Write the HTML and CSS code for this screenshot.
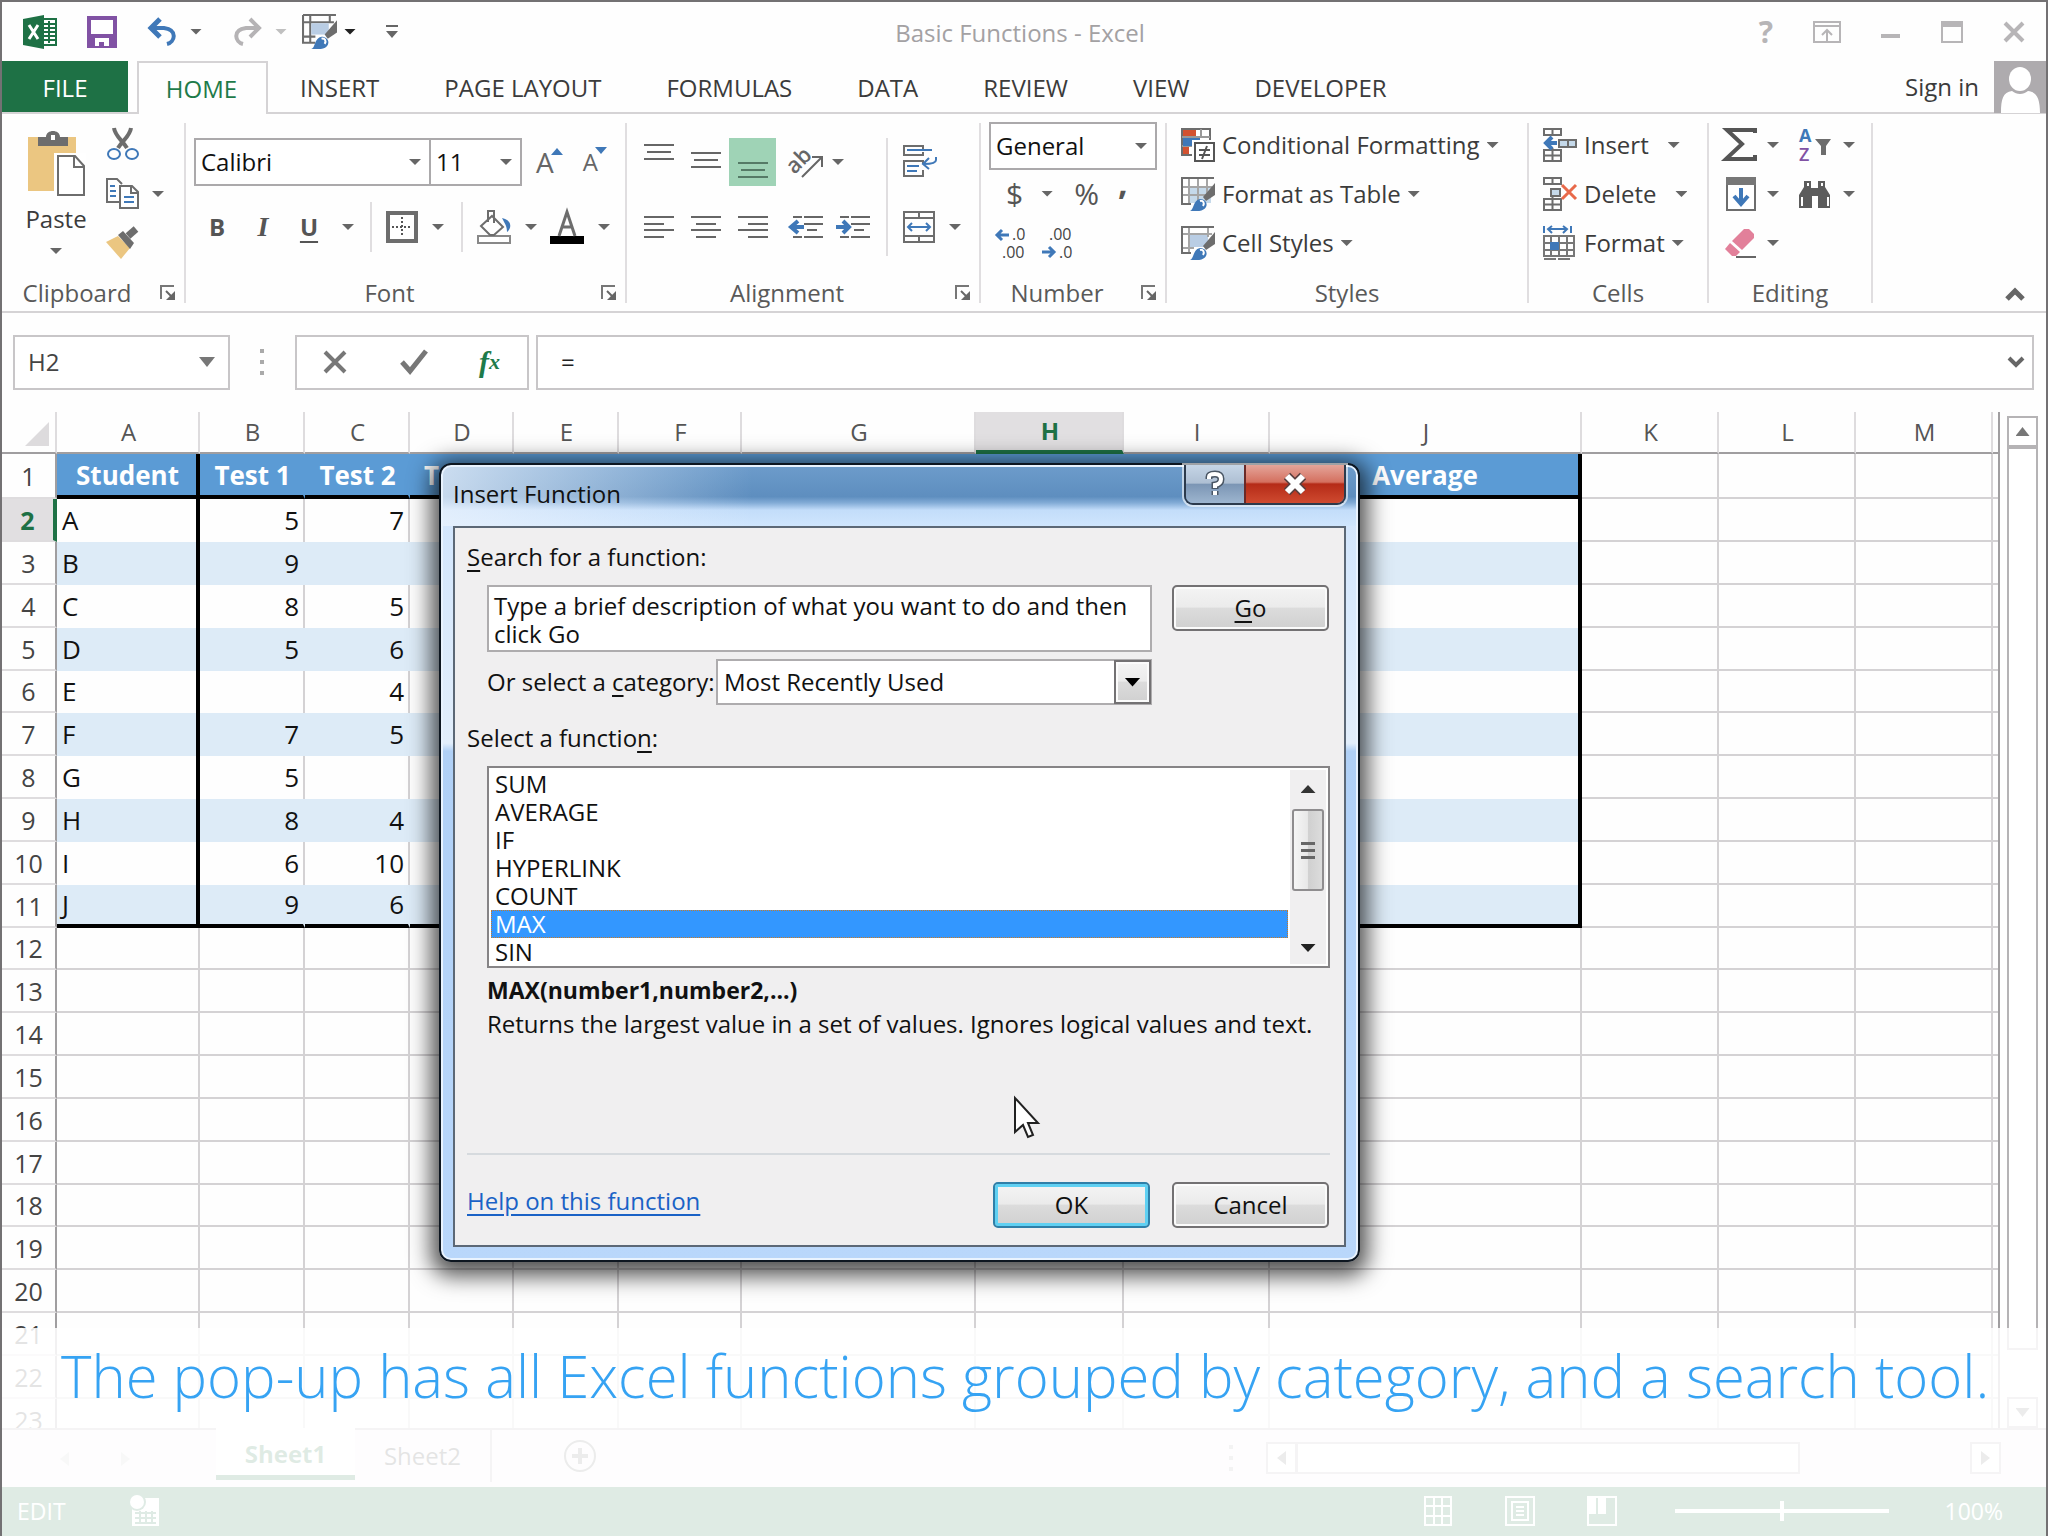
FILE: index.html
```html
<!DOCTYPE html>
<html lang="en">
<head>
<meta charset="utf-8">
<title>Basic Functions - Excel</title>
<link rel="stylesheet" href="styles.css">
</head>
<body>
<svg class="defs" aria-hidden="true">
  <symbol id="brush" viewBox="0 0 34 34">
    <path d="M34 6v12L25 24l-3-4z" fill="#6d6d6d"/>
    <path d="M9 34c4-1 3-11 10-12 5 0 8 4 6 8-2 4-9 5-16 4z" fill="#3f78b8"/>
    <path d="M19 24c3-1 5 2 3 5" fill="none" stroke="#fff" stroke-width="2"/>
  </symbol>
  <symbol id="launch" viewBox="0 0 16 16">
    <path d="M1 14V1h13" fill="none" stroke="#777" stroke-width="2"/>
    <path d="M6 6l7 7" stroke="#666" stroke-width="2"/><path d="M15 6v9H6z" fill="#666"/>
  </symbol>
  <symbol id="cellstop" viewBox="0 0 34 34">
    <path d="M1 1h17v6H1zM9.500 1v6M1 22h17v11H1zM9.500 20v13M1 27.500h17" fill="none" stroke="#6d6d6d" stroke-width="2"/>
  </symbol>
</svg>

<div class="app">
  <header class="titlebar">
    <div class="qat">
      <svg width="34" height="34" viewBox="0 0 34 34"><path d="M18 4h15v26H18z" fill="#fff" stroke="#1e7145" stroke-width="2"/><path d="M20 9h12M20 13h12M20 17h12M20 21h12M20 25h12M26 6v22" stroke="#1e7145" stroke-width="2"/><path d="M0 4L21 0v34L0 30z" fill="#1e7145"/><path d="M6 10l9 14M15 10L6 24" stroke="#fff" stroke-width="3"/></svg>
      <button aria-label="Save"><svg width="30" height="32" viewBox="0 0 30 32"><path d="M2 2h26v28H2z" fill="#fff" stroke="#8152a4" stroke-width="4"/><path d="M2 18h26v12H2z" fill="#8152a4"/><path d="M8 22h14v8h-5v-4h-5v4H8z" fill="#fff"/></svg></button>
      <button aria-label="Undo" class="pair"><svg width="31" height="28" viewBox="0 0 31 28"><path d="M4 10h13c14 2 11 14 3 16" fill="none" stroke="#3f78b8" stroke-width="4"/><path d="M13 1L4 10l9 9" fill="none" stroke="#3f78b8" stroke-width="5"/></svg><i class="caret"></i></button>
      <button aria-label="Redo" class="pair"><svg width="31" height="28" viewBox="0 0 31 28"><path d="M27 10H14C0 12 3 24 11 26" fill="none" stroke="#b5b3b5" stroke-width="4"/><path d="M18 1l9 9-9 9" fill="none" stroke="#b5b3b5" stroke-width="4"/></svg><i class="caret faded"></i></button>
      <button aria-label="Format" class="pair tight"><svg width="35" height="35" viewBox="0 0 34 34"><path d="M1 1h32M1 1v27h12M1 8h30M8 1v27M27 1v8M1 22h12" fill="none" stroke="#6d6d6d" stroke-width="2"/><path d="M9 9h17v11H9z" fill="#b9cde4"/><use href="#brush"/></svg><i class="caret dark"></i></button>
      <button aria-label="Customize toolbar"><svg width="12" height="14" viewBox="0 0 12 14"><path d="M0 1h12" stroke="#666" stroke-width="2"/><path d="M0 6h12l-6 7z" fill="#666"/></svg></button>
    </div>
    <h1>Basic Functions - Excel</h1>
    <div class="winbtns">
      <button aria-label="Help" class="q">?</button>
      <button aria-label="Ribbon options"><svg width="28" height="22" viewBox="0 0 28 22"><path d="M1 1h26v20H1zM1 5h26M14 20V10M9 14l5-5 5 5" fill="none" stroke="#b7b5b7" stroke-width="2"/></svg></button>
      <button aria-label="Minimize"><svg width="20" height="22" viewBox="0 0 20 22"><path d="M0 15h19" stroke="#b7b5b7" stroke-width="4"/></svg></button>
      <button aria-label="Maximize"><svg width="22" height="22" viewBox="0 0 22 22"><path d="M1 1h20v20H1z" fill="none" stroke="#b7b5b7" stroke-width="2"/><path d="M0 0h22v6H0z" fill="#b7b5b7"/></svg></button>
      <button aria-label="Close"><svg width="22" height="22" viewBox="0 0 22 22"><path d="M2 2l18 18M20 2L2 20" stroke="#b7b5b7" stroke-width="4"/></svg></button>
    </div>
  </header>

  <nav class="tabs">
    <button class="file">FILE</button><button class="home">HOME</button><button>INSERT</button><button>PAGE LAYOUT</button><button>FORMULAS</button><button>DATA</button><button>REVIEW</button><button>VIEW</button><button>DEVELOPER</button>
    <span class="grow"></span>
    <a href="#signin">Sign in</a>
    <svg class="avatar" width="52" height="52" viewBox="0 0 52 52"><path d="M0 0h52v52H0z" fill="#aeabae"/><ellipse cx="26" cy="18" rx="11" ry="12" fill="#fff"/><path d="M7 52c0-14 2-21 11-22 5 4 11 4 16 0 9 1 12 8 12 22z" fill="#fff"/></svg>
  </nav>

  <section class="ribbon">
    <div class="group">
      <div class="body clip">
        <button class="paste">
          <svg width="60" height="66" viewBox="0 0 60 66"><path d="M2 6h48v54H2z" fill="#ebc681"/><path d="M12 6h8c0-8 14-8 14 0h8v9H12z" fill="#6d6d6d"/><path d="M25 4h4v5h-4z" fill="#fff"/><path d="M28 22h32v44H28z" fill="#fff"/><path d="M32 25h17l9 10v29H32zM48 25v11h10" fill="#fff" stroke="#6d6d6d" stroke-width="2"/></svg>
          <span>Paste</span><i class="caret"></i>
        </button>
        <div class="stack">
          <button aria-label="Cut"><svg width="34" height="34" viewBox="0 0 34 34"><path d="M8 1c1 8 8 12 13 20M25 1c-1 8-8 12-13 20" fill="none" stroke="#6d6d6d" stroke-width="4"/><g fill="none" stroke="#3f78b8" stroke-width="2"><ellipse cx="8" cy="27" rx="6" ry="5"/><ellipse cx="26" cy="27" rx="6" ry="5"/></g></svg></button>
          <button aria-label="Copy" class="pair"><svg width="34" height="32" viewBox="0 0 34 32"><path d="M14 24H1V1h10l5 5" fill="none" stroke="#6d6d6d" stroke-width="2"/><path d="M14 8h12l6 6v16H14z" fill="#fff" stroke="#6d6d6d" stroke-width="2"/><path d="M25 8v7h7" fill="none" stroke="#6d6d6d" stroke-width="2"/><path d="M4 8h5M4 13h6M4 18h6M18 19h10M18 24h10" stroke="#3f78b8" stroke-width="2"/></svg><i class="caret"></i></button>
          <button aria-label="Format Painter"><svg width="34" height="32" viewBox="0 0 34 32"><path d="M0 15l12-6 12 12-9 11z" fill="#ebc681"/><path d="M12 8l5-4 11 12-4 6z" fill="#6d6d6d"/><path d="M22 9l8-7" stroke="#6d6d6d" stroke-width="7"/></svg></button>
        </div>
      </div>
      <div class="foot"><span>Clipboard</span><button aria-label="Clipboard options"><svg width="16" height="16"><use href="#launch"/></svg></button></div>
    </div>

    <div class="group">
      <div class="body fontbody">
        <div class="row combos">
          <label class="combo wide"><select aria-label="Font"><option>Calibri</option></select><i class="caret"></i></label>
          <label class="combo size"><select aria-label="Font size"><option>11</option></select><i class="caret"></i></label>
          <button aria-label="Grow font" class="grow-a">A<svg width="12" height="8" viewBox="0 0 12 8"><path d="M0 8l6-7 6 7z" fill="#3f78b8"/></svg></button>
          <button aria-label="Shrink font" class="grow-a small">A<svg width="12" height="8" viewBox="0 0 12 8"><path d="M0 0l6 7 6-7z" fill="#3f78b8"/></svg></button>
        </div>
        <div class="row marks">
          <button class="b">B</button><button class="it">I</button><button class="u">U</button><i class="caret c1"></i>
          <span class="sep"></span>
          <button aria-label="Borders" class="pair"><svg width="32" height="32" viewBox="0 0 32 32"><path d="M2 2h28v28H2z" fill="#fff" stroke="#6d6d6d" stroke-width="4"/><path d="M16 6v20M6 16h20" stroke="#555" stroke-width="2" stroke-dasharray="2 2"/></svg><i class="caret"></i></button>
          <span class="sep"></span>
          <button aria-label="Fill color" class="pair"><svg width="34" height="34" viewBox="0 0 34 34"><path d="M1 26h32v7H1z" fill="#fff" stroke="#888" stroke-width="2"/><path d="M25 8c10 2 10 10 5 14 0-6-2-8-5-14z" fill="#3f78b8"/><path d="M4 16L15 6l11 11-9 8h-4z" fill="#fff" stroke="#6d6d6d" stroke-width="2"/><path d="M11 12V1h6v12" fill="none" stroke="#6d6d6d" stroke-width="2"/></svg><i class="caret"></i></button>
          <button aria-label="Font color" class="pair"><svg width="34" height="34" viewBox="0 0 34 34"><path d="M0 26h34v8H0z" fill="#000"/><path d="M9 26L17 2l8 24M12 17h10" fill="none" stroke="#6d6d6d" stroke-width="3"/></svg><i class="caret"></i></button>
        </div>
      </div>
      <div class="foot"><span>Font</span><button aria-label="Font options"><svg width="16" height="16"><use href="#launch"/></svg></button></div>
    </div>

    <div class="group">
      <div class="body alignbody">
        <div class="aligns">
          <div class="row">
            <button aria-label="Top align"><svg width="30" height="36" viewBox="0 0 30 36"><path d="M0 1h30M3 8h24M0 15h30" stroke="#666" stroke-width="2"/></svg></button>
            <button aria-label="Middle align"><svg width="30" height="36" viewBox="0 0 30 36"><path d="M0 9h30M3 16h24M0 23h30" stroke="#666" stroke-width="2"/></svg></button>
            <button aria-label="Bottom align" class="on"><svg width="30" height="36" viewBox="0 0 30 36"><path d="M0 19h30M3 26h24M0 33h30" stroke="#557a66" stroke-width="2"/></svg></button>
            <button aria-label="Orientation" class="orient"><svg width="36" height="34" viewBox="0 0 36 34"><text x="0" y="26" transform="rotate(-45 8 20)" class="ab">ab</text><path d="M14 32L33 13M24 12h10v10" fill="none" stroke="#666" stroke-width="2"/></svg><i class="caret"></i></button>
          </div>
          <div class="row">
            <button aria-label="Align left"><svg width="30" height="22" viewBox="0 0 30 22"><path d="M0 1h30M0 8h20M0 14h30M0 21h20" stroke="#666" stroke-width="2"/></svg></button>
            <button aria-label="Center"><svg width="30" height="22" viewBox="0 0 30 22"><path d="M0 1h30M5 8h20M0 14h30M5 21h20" stroke="#666" stroke-width="2"/></svg></button>
            <button aria-label="Align right"><svg width="30" height="22" viewBox="0 0 30 22"><path d="M0 1h30M10 8h20M0 14h30M10 21h20" stroke="#666" stroke-width="2"/></svg></button>
            <button aria-label="Decrease indent" class="ind"><svg width="34" height="22" viewBox="0 0 34 22"><path d="M4 1h9M15 1h19M15 8h19M18 14h10M4 21h9M15 21h19" stroke="#666" stroke-width="2"/><path d="M15 11H4M9 5l-7 6 7 6" fill="none" stroke="#3f78b8" stroke-width="4"/></svg></button>
            <button aria-label="Increase indent"><svg width="34" height="22" viewBox="0 0 34 22"><path d="M4 1h9M15 1h19M15 8h19M18 14h10M4 21h9M15 21h19" stroke="#666" stroke-width="2"/><path d="M0 11h11M7 5l6 6-6 6" fill="none" stroke="#3f78b8" stroke-width="4"/></svg></button>
          </div>
        </div>
        <span class="sep tall"></span>
        <div class="wraps">
          <button aria-label="Wrap text"><svg width="34" height="32" viewBox="0 0 34 32"><path d="M20 4V1H1v9h19V7M20 19v-3H1v15h19v-6" fill="none" stroke="#6d6d6d" stroke-width="2"/><path d="M4 5h25M4 21h12M4 26h10M33 12v3q0 4-12 4M26 13l-6 6 6 5" fill="none" stroke="#3f78b8" stroke-width="2"/></svg></button>
          <button aria-label="Merge" class="pair"><svg width="32" height="32" viewBox="0 0 32 32"><path d="M1 1h30v30H1zM1 7h30M1 25h30M16 1v6M16 25v6" fill="none" stroke="#6d6d6d" stroke-width="2"/><path d="M5 16h22M9 12l-4 4 4 4M23 12l4 4-4 4" fill="none" stroke="#3f78b8" stroke-width="2"/></svg><i class="caret"></i></button>
        </div>
      </div>
      <div class="foot"><span>Alignment</span><button aria-label="Alignment options"><svg width="16" height="16"><use href="#launch"/></svg></button></div>
    </div>

    <div class="group">
      <div class="body numbody">
        <label class="combo"><select aria-label="Number format"><option>General</option></select><i class="caret"></i></label>
        <div class="row nums"><button>$</button><i class="caret"></i><button>%</button><button aria-label="Comma style" class="comma">,</button></div>
        <div class="row decs">
          <button aria-label="Increase decimal"><svg width="32" height="34" viewBox="0 0 32 34"><path d="M2 10h12M7 5l-5 5 5 5" fill="none" stroke="#3f78b8" stroke-width="3"/><text x="17" y="15" class="dec">.0</text><text x="7" y="33" class="dec">.00</text></svg></button>
          <button aria-label="Decrease decimal"><svg width="32" height="34" viewBox="0 0 32 34"><path d="M0 27h12M7 22l5 5-5 5" fill="none" stroke="#3f78b8" stroke-width="3"/><text x="7" y="15" class="dec">.00</text><text x="17" y="33" class="dec">.0</text></svg></button>
        </div>
      </div>
      <div class="foot"><span>Number</span><button aria-label="Number options"><svg width="16" height="16"><use href="#launch"/></svg></button></div>
    </div>

    <div class="group">
      <div class="body lines">
        <button><svg width="34" height="34" viewBox="0 0 34 34"><path d="M1 1h28v26H1z" fill="#fff" stroke="#6d6d6d" stroke-width="2"/><path d="M20 1v8M1 9h28M1 18h12" stroke="#999" stroke-width="2"/><path d="M2 2h13v6H2zM2 19h6v7H2z" fill="#d35230"/><path d="M2 10h17v8H2z" fill="#3f78b8"/><path d="M11 12h23v22H11z" fill="#fff"/><path d="M14 15h19v18H14z" fill="#fff" stroke="#555" stroke-width="2"/><path d="M18 22h11M18 27h11M26 18l-5 13" stroke="#555" stroke-width="2"/></svg>Conditional Formatting<i class="caret"></i></button>
        <button><svg width="34" height="34" viewBox="0 0 34 34"><path d="M8 10h22v16H8z" fill="#c5d9ea"/><path d="M8 1v26M17 1v26M26 1v18M1 10h30M1 18h26" stroke="#a5a5a5" stroke-width="2"/><path d="M1 28V1h32M1 27h9" fill="none" stroke="#6d6d6d" stroke-width="2"/><use href="#brush"/></svg>Format as Table<i class="caret"></i></button>
        <button><svg width="34" height="34" viewBox="0 0 34 34"><path d="M9 9h18v12H9z" fill="#b9cde4"/><path d="M8 1v26M27 1v10M1 8h30M1 22h12" stroke="#a5a5a5" stroke-width="2"/><path d="M1 28V1h32M1 27h9" fill="none" stroke="#6d6d6d" stroke-width="2"/><use href="#brush"/></svg>Cell Styles<i class="caret"></i></button>
      </div>
      <div class="foot"><span>Styles</span></div>
    </div>

    <div class="group">
      <div class="body lines">
        <button class="spaced"><svg width="34" height="34" viewBox="0 0 34 34"><use href="#cellstop"/><path d="M16 12h17v7H16zM25 12v7" fill="#c5d9ea" stroke="#6d6d6d" stroke-width="2"/><path d="M14 15H3M9 9l-6 6 6 6" fill="none" stroke="#3f78b8" stroke-width="4"/></svg>Insert<i class="caret"></i></button>
        <button class="spaced"><svg width="34" height="34" viewBox="0 0 34 34"><use href="#cellstop"/><path d="M8 12h9v7H8z" fill="#c5d9ea" stroke="#6d6d6d" stroke-width="2"/><path d="M19 8l14 14M33 8L19 22" stroke="#e8694a" stroke-width="3"/></svg>Delete<i class="caret"></i></button>
        <button><svg width="34" height="34" viewBox="0 0 34 34"><path d="M1 10h30v20H1zM8 10v20M16 10v20M24 10v20M1 17h30M1 24h30M1 33h12M15 33h12" fill="none" stroke="#777" stroke-width="2"/><path d="M7 16h9v8H7z" fill="#3f78b8"/><path d="M1 0v7M28 0v7M5 3h19M9 0L5 3l4 4M20 0l4 3-4 4" fill="none" stroke="#3f78b8" stroke-width="2"/></svg>Format<i class="caret"></i></button>
      </div>
      <div class="foot"><span>Cells</span></div>
    </div>

    <div class="group">
      <div class="body editing">
        <button aria-label="AutoSum" class="pair"><svg width="32" height="34" viewBox="0 0 32 34"><path d="M31 5V2H3l15 14L2 31h29v-4" fill="none" stroke="#555" stroke-width="4"/></svg><i class="caret"></i></button>
        <button aria-label="Sort and filter" class="pair"><svg width="34" height="36" viewBox="0 0 34 36"><text x="1" y="15" class="sa">A</text><text x="1" y="34" class="sz">Z</text><path d="M17 12h16l-5 7v9h-5v-9z" fill="#6d6d6d"/></svg><i class="caret"></i></button>
        <button aria-label="Fill" class="pair"><svg width="32" height="34" viewBox="0 0 32 34"><path d="M3 1h28v32H3z" fill="#fff" stroke="#6d6d6d" stroke-width="2"/><path d="M2 0h30v8H2z" fill="#777"/><path d="M17 11v15M10 19l7 8 7-8" fill="none" stroke="#3f78b8" stroke-width="4"/></svg><i class="caret"></i></button>
        <button aria-label="Find" class="pair"><svg width="34" height="30" viewBox="0 0 34 30"><path d="M1 29V16L6 8V2h7v7h7V2h7v6l5 8v13H20V17h-6v12z" fill="#5c5c5c"/><path d="M4 18v9M30 18v9M10 4v3M24 4v3" stroke="#fff" stroke-width="2"/></svg><i class="caret"></i></button>
        <button aria-label="Clear" class="pair"><svg width="32" height="30" viewBox="0 0 32 30"><path d="M8 13L20 1h5l5 5v4L18 22z" fill="#e2809a"/><path d="M6 15l10 9-4 4H8l-7-7z" fill="#e2809a"/><path d="M12 29h20" stroke="#666" stroke-width="2"/></svg><i class="caret"></i></button>
      </div>
      <div class="foot"><span>Editing</span></div>
    </div>
    <div class="rest"><button aria-label="Collapse ribbon"><svg width="20" height="14" viewBox="0 0 20 14"><path d="M2 12l8-8 8 8" fill="none" stroke="#666" stroke-width="5"/></svg></button></div>
  </section>

  <section class="fbar">
    <label class="namebox"><input aria-label="Name box" value="H2"><i class="caret big"></i></label>
    <svg class="dots" width="4" height="26" viewBox="0 0 4 26"><path d="M2 0v4M2 11v4M2 22v4" stroke="#aaa" stroke-width="4"/></svg>
    <div class="fx">
      <button aria-label="Cancel entry"><svg width="26" height="24" viewBox="0 0 26 24"><path d="M3 2l20 20M23 2L3 22" stroke="#777" stroke-width="4"/></svg></button>
      <button aria-label="Enter"><svg width="28" height="26" viewBox="0 0 28 26"><path d="M2 13l8 9L26 2" fill="none" stroke="#777" stroke-width="5"/></svg></button>
      <button class="fn">f<sub>x</sub></button>
    </div>
    <label class="formula"><input aria-label="Formula" value="="><svg width="16" height="12" viewBox="0 0 16 12"><path d="M1 2l7 7 7-7" fill="none" stroke="#666" stroke-width="4"/></svg></label>
  </section>

  <main class="sheet">
    <table>
      <colgroup><col class="c0"><col class="ca"><col class="cb"><col class="cb"><col class="cd"><col class="cb"><col class="cf"><col class="cg"><col class="ch"><col class="ci"><col class="cj"><col class="ck"><col class="ck"><col class="ck"><col></colgroup>
      <thead><tr><th><svg width="24" height="24" viewBox="0 0 24 24"><path d="M24 0v24H0z" fill="#dddbdd"/></svg></th><th>A</th><th>B</th><th>C</th><th>D</th><th>E</th><th>F</th><th>G</th><th class="sel">H</th><th>I</th><th>J</th><th>K</th><th>L</th><th>M</th><th></th></tr></thead>
      <tbody>
      <tr class="head"><th>1</th><td class="hl">Student</td><td>Test 1</td><td>Test 2</td><td>Test 3</td><td></td><td></td><td></td><td></td><td></td><td>Average</td><td></td><td></td><td></td><td></td></tr>
      <tr class="data"><th class="sel">2</th><td>A</td><td>5</td><td>7</td><td></td><td></td><td></td><td></td><td></td><td></td><td></td><td></td><td></td><td></td><td></td></tr>
      <tr class="data band"><th>3</th><td>B</td><td>9</td><td></td><td></td><td></td><td></td><td></td><td></td><td></td><td></td><td></td><td></td><td></td><td></td></tr>
      <tr class="data"><th>4</th><td>C</td><td>8</td><td>5</td><td></td><td></td><td></td><td></td><td></td><td></td><td></td><td></td><td></td><td></td><td></td></tr>
      <tr class="data band"><th>5</th><td>D</td><td>5</td><td>6</td><td></td><td></td><td></td><td></td><td></td><td></td><td></td><td></td><td></td><td></td><td></td></tr>
      <tr class="data"><th>6</th><td>E</td><td></td><td>4</td><td></td><td></td><td></td><td></td><td></td><td></td><td></td><td></td><td></td><td></td><td></td></tr>
      <tr class="data band"><th>7</th><td>F</td><td>7</td><td>5</td><td></td><td></td><td></td><td></td><td></td><td></td><td></td><td></td><td></td><td></td><td></td></tr>
      <tr class="data"><th>8</th><td>G</td><td>5</td><td></td><td></td><td></td><td></td><td></td><td></td><td></td><td></td><td></td><td></td><td></td><td></td></tr>
      <tr class="data band"><th>9</th><td>H</td><td>8</td><td>4</td><td></td><td></td><td></td><td></td><td></td><td></td><td></td><td></td><td></td><td></td><td></td></tr>
      <tr class="data"><th>10</th><td>I</td><td>6</td><td>10</td><td></td><td></td><td></td><td></td><td></td><td></td><td></td><td></td><td></td><td></td><td></td></tr>
      <tr class="data band last"><th>11</th><td>J</td><td>9</td><td>6</td><td></td><td></td><td></td><td></td><td></td><td></td><td></td><td></td><td></td><td></td><td></td></tr>
      <tr><th>12</th><td></td><td></td><td></td><td></td><td></td><td></td><td></td><td></td><td></td><td></td><td></td><td></td><td></td><td></td></tr>
      <tr><th>13</th><td></td><td></td><td></td><td></td><td></td><td></td><td></td><td></td><td></td><td></td><td></td><td></td><td></td><td></td></tr>
      <tr><th>14</th><td></td><td></td><td></td><td></td><td></td><td></td><td></td><td></td><td></td><td></td><td></td><td></td><td></td><td></td></tr>
      <tr><th>15</th><td></td><td></td><td></td><td></td><td></td><td></td><td></td><td></td><td></td><td></td><td></td><td></td><td></td><td></td></tr>
      <tr><th>16</th><td></td><td></td><td></td><td></td><td></td><td></td><td></td><td></td><td></td><td></td><td></td><td></td><td></td><td></td></tr>
      <tr><th>17</th><td></td><td></td><td></td><td></td><td></td><td></td><td></td><td></td><td></td><td></td><td></td><td></td><td></td><td></td></tr>
      <tr><th>18</th><td></td><td></td><td></td><td></td><td></td><td></td><td></td><td></td><td></td><td></td><td></td><td></td><td></td><td></td></tr>
      <tr><th>19</th><td></td><td></td><td></td><td></td><td></td><td></td><td></td><td></td><td></td><td></td><td></td><td></td><td></td><td></td></tr>
      <tr><th>20</th><td></td><td></td><td></td><td></td><td></td><td></td><td></td><td></td><td></td><td></td><td></td><td></td><td></td><td></td></tr>
      <tr><th>21</th><td></td><td></td><td></td><td></td><td></td><td></td><td></td><td></td><td></td><td></td><td></td><td></td><td></td><td></td></tr>
      <tr><th>22</th><td></td><td></td><td></td><td></td><td></td><td></td><td></td><td></td><td></td><td></td><td></td><td></td><td></td><td></td></tr>
      <tr><th>23</th><td></td><td></td><td></td><td></td><td></td><td></td><td></td><td></td><td></td><td></td><td></td><td></td><td></td><td></td></tr>
      </tbody>
    </table>
    <div class="vscroll">
      <button aria-label="Scroll up"><i class="tri up"></i></button>
      <div class="vthumb"></div><div class="vtrack"></div>
      <button aria-label="Scroll down"><i class="tri down"></i></button>
    </div>
  </main>

  <footer class="sheettabs">
    <div class="navs"><i class="tri left"></i><i class="tri right"></i></div>
    <button class="cur">Sheet1</button><button class="other">Sheet2</button>
    <button aria-label="New sheet" class="plus"><svg width="34" height="34" viewBox="0 0 34 34"><circle cx="17" cy="17" r="15" fill="none" stroke="#777" stroke-width="2"/><path d="M17 9v16M9 17h16" stroke="#777" stroke-width="4"/></svg></button>
    <span class="grow"></span>
    <div class="hscroll">
      <svg class="dots" width="4" height="26" viewBox="0 0 4 26"><path d="M2 0v4M2 11v4M2 22v4" stroke="#aaa" stroke-width="4"/></svg>
      <button aria-label="Scroll left"><i class="tri left"></i></button><div class="hthumb"></div><span class="grow"></span>
      <button aria-label="Scroll right"><i class="tri right"></i></button>
    </div>
  </footer>
  <div class="status">
    <span>EDIT</span>
    <svg width="30" height="32" viewBox="0 0 30 32"><path d="M2 3h27v28H2z" fill="#fff"/><circle cx="7" cy="7" r="9" fill="#217346"/><circle cx="7" cy="7" r="7" fill="#fff"/><path d="M5 18h21M5 23h21M5 28h21M10 16v13M16 16v13M22 16v13" stroke="#217346" stroke-width="2"/></svg>
    <span class="grow"></span>
    <button aria-label="Normal view"><svg width="30" height="30" viewBox="0 0 30 30"><path d="M2 1h26v28H2zM11 1v28M19 1v28M2 10h26M2 20h26" fill="none" stroke="#fff" stroke-width="2"/></svg></button>
    <button aria-label="Page layout view"><svg width="30" height="30" viewBox="0 0 30 30"><path d="M1 1h28v28H1zM7 6h16v18H7zM11 11h8M11 15h8M11 19h8" fill="none" stroke="#fff" stroke-width="2"/></svg></button>
    <button aria-label="Page break view"><svg width="30" height="30" viewBox="0 0 30 30"><path d="M1 1h28v28H1z" fill="none" stroke="#fff" stroke-width="2"/><path d="M1 1h8v17H1zM11 1h8v17h-8z" fill="#fff"/></svg></button>
    <input type="range" aria-label="Zoom" value="50">
    <span class="pct">100%</span>
  </div>

  <div class="dialog" role="dialog" aria-labelledby="dlg-title">
    <div class="dtitle">
      <h2 id="dlg-title">Insert Function</h2>
      <div class="dctl">
        <button aria-label="Help" class="dq"><svg width="20" height="26" viewBox="0 0 20 26"><path d="M4 8V6q0-3 6-3t6 5-6 6v4M10 20v4" fill="none" stroke="#4a5664" stroke-width="7"/><path d="M4 8V6q0-3 6-3t6 5-6 6v3M10 20v4" fill="none" stroke="#fff" stroke-width="4"/></svg></button>
        <button aria-label="Close" class="dx"><svg width="24" height="20" viewBox="0 0 24 20"><path d="M4 2l16 16M20 2L4 18" stroke="#5a4040" stroke-width="9"/><path d="M4 2l16 16M20 2L4 18" stroke="#fff" stroke-width="6"/></svg></button>
      </div>
    </div>
    <form class="client">
      <label for="q"><u>S</u>earch for a function:</label>
      <div class="drow search"><textarea id="q">Type a brief description of what you want to do and then click Go</textarea><button type="button" class="btn"><span><u>G</u>o</span></button></div>
      <div class="drow cat"><label for="cat">Or select a <u>c</u>ategory:</label>
        <div class="dsel"><select id="cat"><option>Most Recently Used</option></select><span class="drop"><i class="caret black"></i></span></div></div>
      <span class="lab" id="fnlab">Select a functio<u>n</u>:</span>
      <div class="list">
        <ul role="listbox" aria-labelledby="fnlab" tabindex="0">
          <li role="option">SUM</li><li role="option">AVERAGE</li><li role="option">IF</li><li role="option">HYPERLINK</li><li role="option">COUNT</li><li role="option" aria-selected="true" class="picked">MAX</li><li role="option">SIN</li>
        </ul>
        <div class="lscroll"><i class="caret upc"></i><div class="lthumb"></div><span class="grow"></span><i class="caret black"></i></div>
      </div>
      <strong>MAX(number1,number2,...)</strong>
      <p>Returns the largest value in a set of values. Ignores logical values and text.</p>
      <hr>
      <div class="acts"><a href="#help">Help on this function</a><span class="grow"></span><button type="button" class="btn ok">OK</button><button type="button" class="btn">Cancel</button></div>
    </form>
    <svg class="pointer" width="28" height="44" viewBox="0 0 28 44"><path d="M2 2v34l8-7 5 12 5-2-5-12h10z" fill="#fff" stroke="#222" stroke-width="2"/></svg>
  </div>

  <div class="caption">The pop-up has all Excel functions grouped by category, and a search tool.</div>
</div>
</body>
</html>
```
FILE: styles.css
```css
* { box-sizing: border-box; }
body { margin: 0; font-family: "Open Sans", "Noto Sans", sans-serif; font-size: 24px; line-height: 32px; color: #444; background: #fff; }
button, input, select, textarea { font: inherit; color: inherit; background: none; border: 0; padding: 0; margin: 0; border-radius: 0; }
button { display: flex; flex: none; align-items: center; justify-content: center; }
select { appearance: none; }
input, select, textarea { outline: 0; min-width: 0; }
svg { display: block; flex: none; overflow: visible; }
h1, h2, p, ul { margin: 0; padding: 0; font-size: 24px; font-weight: 400; }
.defs { position: absolute; width: 0; height: 0; }
.grow { flex: 1; }

.app { position: relative; display: flex; flex-direction: column; height: 100vh; border: 2px solid #737173; border-bottom: 0; overflow: hidden; background: #fefefe; }

.caret { flex: none; width: 12px; height: 6px; background: #666; clip-path: polygon(0 0, 100% 0, 50% 100%); }
.caret.faded { background: #c0c0c0; }
.caret.dark, .caret.black { background: #222; }
.caret.big { width: 16px; height: 10px; background: #777; }
.caret.upc { clip-path: polygon(50% 0, 100% 100%, 0 100%); background: #333; }
.tri { width: 14px; height: 9px; background: #777; clip-path: polygon(0 0, 100% 0, 50% 100%); }
.tri.up { clip-path: polygon(50% 0, 100% 100%, 0 100%); }
.tri.left { width: 9px; height: 14px; clip-path: polygon(100% 0, 100% 100%, 0 50%); }
.tri.right { width: 9px; height: 14px; clip-path: polygon(0 0, 100% 50%, 0 100%); }
.pair { gap: 12px; }

/* title bar */
.titlebar { flex: none; display: grid; grid-template-columns: 1fr auto 1fr; align-items: center; height: 59px; padding: 0 21px; }
.titlebar h1 { color: #a3a1a3; padding: 2px 8px 0 0; }
.qat { display: flex; align-items: center; gap: 30px; }
.qat .tight { margin-left: -15px; gap: 7px; }
.winbtns { display: flex; justify-content: flex-end; align-items: center; gap: 40px; color: #b7b5b7; }
.q { font-weight: 700; font-size: 30px; }

/* ribbon tabs */
.tabs { flex: none; display: flex; align-items: stretch; height: 53px; border-bottom: 2px solid #d5d3d5; color: #3b3b3b; }
.tabs button { padding: 2px 33px 0 32px; }
.tabs .file { background: #1e7145; color: #fff; width: 126px; padding: 2px 0 0; margin-right: 9px; }
.tabs .home { color: #1e7b4a; border: 2px solid #d5d3d5; border-bottom: 0; width: 131px; padding: 0 2px 0 0; margin-bottom: -2px; background: #fefefe; }
.tabs a { color: inherit; text-decoration: none; align-self: center; margin-right: 15px; }

/* ribbon */
.ribbon { flex: none; display: grid; grid-template-columns: 184px 441px 354px 186px 362px 180px 164px 1fr; height: 199px; border-bottom: 2px solid #d5d3d5; padding: 9px 0 8px; }
.group { display: flex; flex-direction: column; border-right: 2px solid #e0dee0; min-width: 0; }
.body { flex: 1; }
.foot { display: grid; grid-template-columns: 1fr auto; align-items: center; padding: 0 8px 0 0; height: 33px; color: #595959; margin-bottom: -6px; }
.foot span { text-align: center; padding-right: 8px; }
.foot span:only-child { grid-column: 1 / 3; padding: 0 0 0 8px; }
.row { display: flex; align-items: center; }
.clip { display: flex; padding: 4px 0 0 15px; gap: 11px; }
.paste { flex-direction: column; justify-content: flex-start; width: 78px; padding-top: 4px; }
.paste span { margin: 6px 0 13px; color: #3b3b3b; }
.stack { display: flex; flex-direction: column; align-items: flex-start; gap: 17px; }

.combo { display: grid; grid-template-columns: 1fr; align-items: center; border: 2px solid #aba9ab; height: 48px; background: #fff; color: #111; }
.combo select, .combo .caret { grid-area: 1 / 1; }
.combo select { padding: 0 5px; height: 44px; }
.combo .caret { justify-self: end; margin-right: 8px; pointer-events: none; }
.fontbody { padding: 15px 0 0 8px; }
.combo.wide { width: 237px; }
.combo.size { width: 93px; margin-left: -2px; }
.grow-a { margin-left: 14px; font-size: 28px; font-weight: 500; color: #666; }
.grow-a svg { margin: -22px 0 0 -3px; }
.grow-a.small { font-size: 24px; margin-left: 20px; }
.marks { margin-top: 16px; height: 50px; color: #555; }
.marks button:not(.pair) { width: 46px; }
.marks .b { font-weight: 700; }
.marks .it { font-family: "Liberation Serif", serif; font-style: italic; font-weight: 700; font-size: 28px; }
.marks .u { font-weight: 700; text-decoration: underline; text-underline-offset: 5px; }
.marks .c1 { margin: 0 12px 0 10px; }
.sep { align-self: stretch; width: 2px; background: #e0dee0; margin-right: 15px; }
.marks .sep { margin: 0 14px 0 4px; }
.marks .pair { gap: 14px; margin-right: 13px; }

.alignbody { display: flex; padding: 15px 0 0 8px; }
.aligns { width: 251px; }
.aligns .row { height: 48px; }
.aligns .row + .row { margin-top: 17px; }
.aligns button { width: 47px; height: 48px; }
.aligns .on { background: #9fd3b6; }
.aligns .orient { width: auto; margin-left: 12px; gap: 8px; }
.aligns .ind { margin-left: 6px; }
.ab { font: 600 22px "Open Sans", sans-serif; fill: #666; }
.sep.tall { align-self: flex-start; height: 118px; }
.wraps { display: flex; flex-direction: column; gap: 34px; padding-top: 7px; align-items: flex-start; }
.wraps .pair { gap: 14px; }

.numbody { padding: 0 8px; }
.numbody .combo { margin-top: -1px; }
.nums { height: 47px; padding-left: 17px; font-size: 30px; color: #555; }
.nums .caret { margin: 0 21px 0 18px; }
.nums .comma { margin: 0 0 0 19px; font-weight: 700; font-size: 34px; line-height: 32px; padding-bottom: 24px; }
.decs { gap: 15px; padding: 8px 0 0 6px; }
.dec { font: 16px "Open Sans", sans-serif; fill: #444; }

.lines { display: flex; flex-direction: column; align-items: flex-start; padding: 5px 0 0 14px; gap: 15px; color: #3b3b3b; }
.lines button { height: 34px; gap: 7px; }
.lines .spaced .caret { margin-left: 12px; }
.editing { display: grid; grid-template-columns: 62px auto; grid-auto-rows: 34px; row-gap: 15px; column-gap: 12px; justify-content: start; padding: 5px 0 0 15px; }
.editing button { justify-content: flex-start; }
.editing .pair { gap: 11px; }
.sa { font: 700 18px "Open Sans", sans-serif; fill: #3f78b8; }
.sz { font: 600 18px "Open Sans", sans-serif; fill: #8152a4; }
.rest { display: flex; justify-content: flex-end; align-items: flex-end; padding: 0 21px 2px 0; }

/* formula bar */
.fbar { flex: none; display: flex; align-items: center; height: 99px; padding: 0 12px 1px 11px; }
.fbar > label, .fx { height: 55px; border: 2px solid #c8c6c8; background: #fff; display: flex; align-items: center; }
.namebox { width: 217px; padding: 0 13px; }
.namebox input { flex: 1; }
.fbar > .dots { margin: 0 31px 0 30px; }
.fx { width: 234px; justify-content: space-between; padding: 0 27px 0 25px; }
.fn { font: italic 700 30px "Liberation Serif", serif; color: #1e7b4a; }
.fn sub { font-size: 22px; line-height: 1; }
.formula { flex: 1; margin-left: 7px; padding: 0 8px 0 23px; color: #222; }
.formula input { flex: 1; }

/* grid */
.sheet { flex: 1; min-height: 0; display: flex; overflow: hidden; }
table { flex: 1; width: 0; table-layout: fixed; border-collapse: separate; border-spacing: 0; border-right: 2px solid #a09ea0; align-self: flex-start; }
.c0 { width: 55px; } .ca { width: 143px; } .cb { width: 105px; } .cd { width: 104px; } .cf { width: 123px; } .cg { width: 234px; } .ch { width: 148px; } .ci { width: 146px; } .cj { width: 312px; } .ck { width: 137px; }
th { font-weight: 400; padding: 0; }
thead th { height: 42px; border-right: 2px solid #dedcde; border-bottom: 2px solid #a09ea0; color: #555; padding-left: 2px; }
thead th:first-child svg { margin: 4px 6px 0 auto; }
thead th.sel { background: #e1dfe1; color: #1e7145; font-weight: 700; border-bottom: 4px solid #1e7145; }
tbody tr { height: 43px; }
tbody tr:nth-child(6n) { height: 42px; }
tbody th { border-right: 2px solid #a09ea0; border-bottom: 2px solid #dedcde; font-size: 25px; }
tbody th.sel { background: #e1dfe1; color: #1e7145; font-weight: 700; border-right: 4px solid #1e7145; }
td { border-right: 2px solid #d4d2d4; border-bottom: 2px solid #d4d2d4; padding: 0 4px 2px 5px; font-size: 26px; line-height: 36px; color: #111; white-space: nowrap; }
tr > :last-child:last-child { border-right: 0; }
tr.head { height: 45px; }
tr.head td:nth-child(n+2):nth-child(-n+11) { background: #5b9bd5; color: #fff; font-weight: 700; text-align: center; border-right-color: #5b9bd5; border-bottom: 4px solid #000; padding: 0 0 0 2px; }
tr.data td:nth-child(-n+11) { text-align: right; border-bottom: 0; }
tr.data td:nth-child(2) { text-align: left; }
tr.band td:nth-child(-n+11) { background: #ddebf7; border-right-color: #ddebf7; }
tr.data td:nth-child(2), tr.head td.hl:nth-child(2) { border-right: 4px solid #000; }
tr.data td:nth-child(11), tr.head td:nth-child(11):nth-child(11) { border-right: 4px solid #000; }
tr.last td:nth-child(-n+11) { border-bottom: 4px solid #000; }

.vscroll { flex: none; width: 46px; padding: 4px 8px 0 7px; display: flex; flex-direction: column; }
.vscroll button { height: 31px; border: 2px solid #b5b3b5; background: #fff; }
.vthumb { flex: 19; border: 2px solid #b5b3b5; background: #fff; }
.vtrack { flex: 1; }

/* sheet tabs and status */
.sheettabs { flex: none; display: flex; align-items: flex-start; height: 59px; border-top: 2px solid #b5b3b5; background: #f3f1f3; }
.navs { display: flex; gap: 52px; width: 214px; padding: 22px 0 0 58px; }
.navs .tri { background: #ccc; }
.sheettabs button { height: 52px; }
.cur { width: 139px; background: #fff; color: #1e7145; font-weight: 700; border-bottom: 5px solid #1e7145; padding-top: 4px; margin-top: -2px; }
.other { width: 137px; border-right: 2px solid #b5b3b5; }
.sheettabs .plus { margin-left: 71px; }
.hscroll { display: flex; align-items: center; width: 772px; margin: 12px 45px 0 0; height: 32px; }
.hscroll .dots { margin-right: 33px; }
.sheettabs .hscroll button { width: 31px; height: 32px; border: 2px solid #b5b3b5; background: #fff; }
.hthumb { width: 504px; height: 32px; border: 2px solid #b5b3b5; background: #fff; margin-left: -1px; }
.status { flex: none; display: flex; align-items: center; height: 49px; background: #1e7145; color: #fff; padding: 0 43px 2px 15px; font-size: 23px; }
.status > svg { margin-left: 64px; }
.status button { margin-right: 52px; }
.status input { appearance: none; width: 214px; height: 20px; margin: 0 56px 0 6px; background: linear-gradient(#fff, #fff) center / 100% 4px no-repeat; }
.status input::-webkit-slider-thumb { appearance: none; width: 4px; height: 20px; background: #fff; }

/* caption band over the bottom of the window */
.caption { position: absolute; left: -2px; right: -2px; bottom: 0; height: 208px; padding: 8px 0 0 61px; background: rgba(255, 255, 255, .86); color: #36a3f3; font-size: 58px; line-height: 80px; font-weight: 300; white-space: nowrap; }

/* dialog */
.dialog { position: absolute; left: 437px; top: 461px; width: 921px; border: 2px solid #0d1620; border-radius: 12px; padding: 0 12px 13px; color: #111;
  background: linear-gradient(90deg, rgba(235, 243, 253, .75), rgba(255, 255, 255, 0) 34%) 0 0 / 100% 61px no-repeat, linear-gradient(#6d9ccb, #5e8ebf 52%, #82abd6 62%, #c3ddfa 74%, #cfe5fd 100%) 0 0 / 100% 61px no-repeat, linear-gradient(#cfe4fd, #e2eefb 35%, #b0d0f6 36%, #b9d7fb);
  box-shadow: inset 0 0 0 2px #e9f3fe, 0 6px 22px 8px rgba(0, 0, 0, .68); }
.dtitle { display: flex; justify-content: space-between; align-items: flex-start; height: 61px; }
.dtitle h2 { padding-top: 13px; }
.dctl { display: flex; height: 40px; border: 2px solid #2c3a4c; border-top: 0; border-radius: 0 0 9px 9px; overflow: hidden; box-shadow: 0 0 0 2px rgba(255, 255, 255, .6); }
.dq { width: 60px; background: linear-gradient(#c5d5e6, #aebfd3 48%, #7b95b4 50%, #9db5cf); border-right: 2px solid #6a2a28; }
.dx { width: 98px; background: linear-gradient(#e5a59a, #d4705f 45%, #b52b17 50%, #cf4a30); }
.client { display: flex; flex-direction: column; border: 2px solid #5c6876; background: #f0eff0; padding: 13px 14px 17px 12px; }
.client u { text-underline-offset: 4px; text-decoration-thickness: 2px; }
.drow { display: flex; padding-left: 20px; }
.search { margin-top: 12px; gap: 20px; padding-right: 1px; }
textarea { flex: 1; height: 67px; border: 2px solid #aeacae; background: #fff; padding: 5px; line-height: 28px; resize: none; overflow: hidden; }
.btn { width: 157px; height: 46px; border: 2px solid #737173; border-radius: 5px; background: linear-gradient(#f4f4f4, #ebebeb 48%, #dcdcdc 50%, #d0d0d0); box-shadow: inset 0 0 0 2px #fbfbfb; }
.btn.ok { border-color: #2f7fa8; box-shadow: inset 0 0 0 3px #5fd0f2; }
.cat { margin-top: 7px; align-items: center; padding-right: 178px; justify-content: space-between; white-space: nowrap; }
.dsel { flex: none; width: 436px; display: grid; }
.dsel select, .drop { grid-area: 1 / 1; }
.dsel select { height: 46px; border: 2px solid #aeacae; background: #fff; padding: 0 6px; }
.drop { justify-self: end; width: 37px; height: 44px; margin: 1px; border: 2px solid #737173; background: linear-gradient(#f4f4f4, #ebebeb 48%, #dcdcdc 50%, #d0d0d0); box-shadow: inset 0 0 0 2px #fbfbfb; display: flex; align-items: center; justify-content: center; pointer-events: none; }
.drop .caret { width: 16px; height: 9px; background: #000; }
.lab { margin-top: 17px; }
.list { display: flex; margin: 12px 0 0 20px; height: 202px; border: 2px solid #868486; background: #fff; padding: 2px; }
.list ul { flex: 1; list-style: none; line-height: 28px; }
.list li { padding-left: 4px; height: 28px; }
.picked { background: #3397ff; color: #fff; outline: 1px dotted #c87a28; outline-offset: -1px; }
.lscroll { width: 36px; margin-left: 2px; background: #f0eff0; display: flex; flex-direction: column; align-items: center; padding: 15px 0 12px; }
.lscroll .caret { width: 15px; height: 8px; }
.lthumb { width: 32px; height: 82px; margin-top: 16px; border: 2px solid #8f8d8f; border-radius: 3px; background: linear-gradient(#666, #666) center 31px / 14px 3px no-repeat, linear-gradient(#666, #666) center 38px / 14px 3px no-repeat, linear-gradient(#666, #666) center 45px / 14px 3px no-repeat, linear-gradient(90deg, #f6f6f6, #e8e8e8 48%, #d0d0d0 52%, #dcdcdc); }
.client strong { font-weight: 700; font-size: 23px; margin: 6px 0 2px 20px; }
.client p { margin-left: 20px; white-space: nowrap; }
.client hr { width: 100%; border: 0; height: 2px; background: #d6dade; margin: 113px 0 27px; }
.acts { display: flex; align-items: center; padding-right: 1px; }
.acts a { color: #1a62c6; padding-bottom: 8px; text-underline-offset: 4px; }
.acts .ok { margin-right: 22px; }
.pointer { position: absolute; left: 572px; top: 631px; }
```
